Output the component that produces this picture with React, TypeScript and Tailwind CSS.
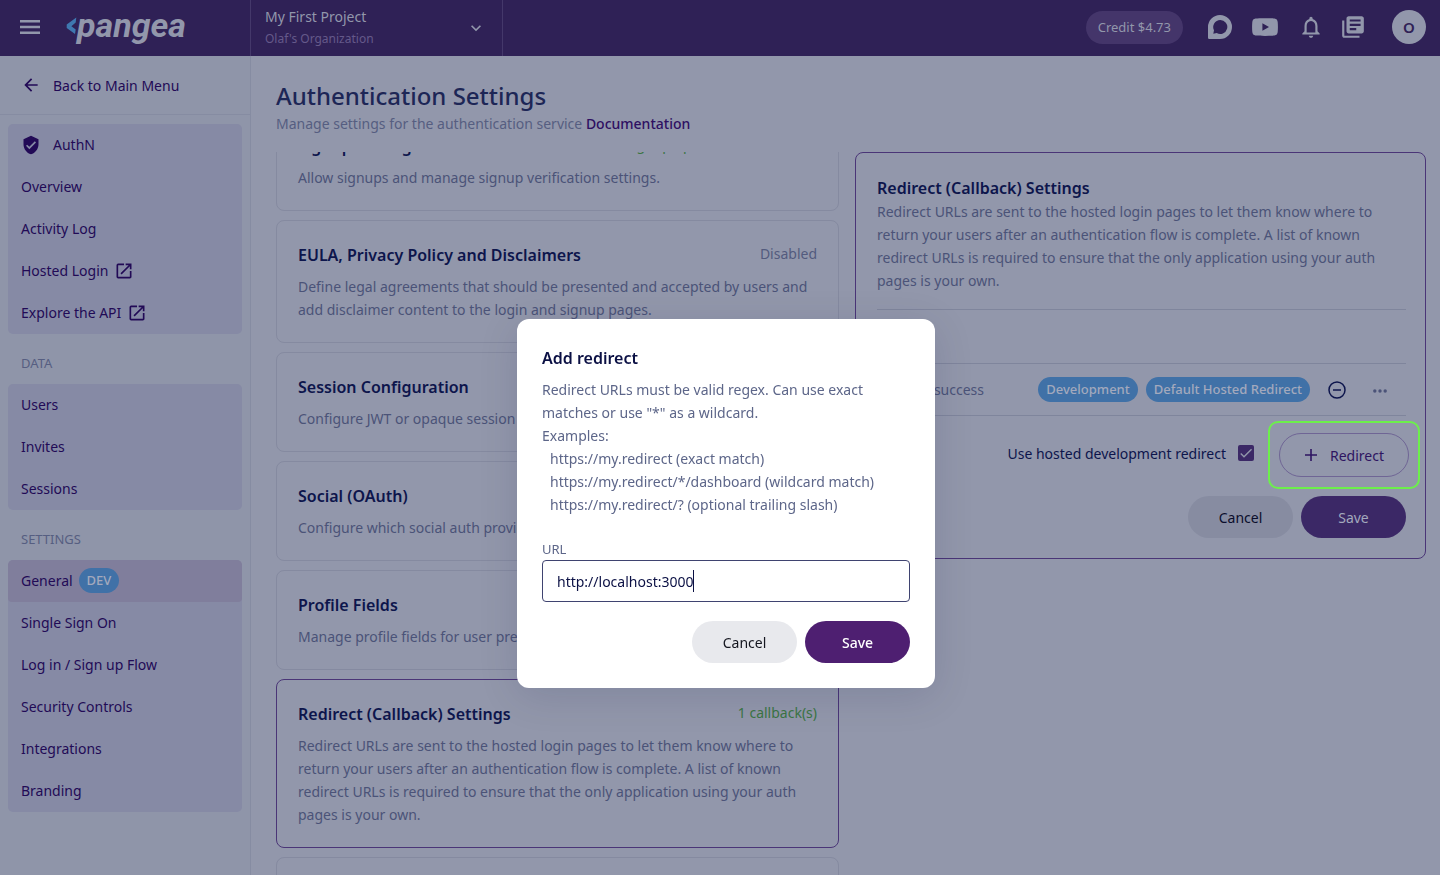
import type { ReactNode } from "react";
import {
  MdArrowBack,
  MdCheck,
  MdKeyboardArrowDown,
  MdLibraryBooks,
  MdNotificationsNone,
  MdOpenInNew,
  MdVerifiedUser,
} from "react-icons/md";

function Logo() {
  return (
    <a href="#" aria-label="Pangea" className="flex items-center text-[#9297ab]">
      <svg width="11" height="18" viewBox="0 0 11 18" className="-mt-1" aria-hidden="true">
        <path d="M10.300.5.7 7.500v3.500L9 17l.7-4.600L5.400 9.200 9.700 5.500z" fill="#3f78b0" />
      </svg>
      <span className="-mt-1.5 font-['Roboto',sans-serif] text-[34px] leading-9 font-bold italic">pangea</span>
    </a>
  );
}

function MenuIcon() {
  return (
    <svg width="20" height="14" viewBox="0 0 20 14" fill="currentColor" aria-hidden="true">
      <path d="M0 0h20v2.400H0zM0 5.800h20v2.400H0zM0 11.600h20V14H0z" />
    </svg>
  );
}

function ChatIcon() {
  return (
    <svg width="24" height="24" viewBox="0 0 24 24" aria-hidden="true">
      <path
        fillRule="evenodd"
        fill="currentColor"
        d="M12 0a12 12 0 1 1 0 24H1.200A1.200 1.200 0 0 1 0 22.800V12A12 12 0 0 1 12 0Zm.2 5A7 7 0 0 0 6 15.300L5.300 18.700l3.400-.7A7 7 0 1 0 12.200 5Z"
      />
    </svg>
  );
}

function VideoIcon() {
  return (
    <svg width="26" height="18" viewBox="0 0 26 18" aria-hidden="true">
      <path
        fillRule="evenodd"
        fill="currentColor"
        d="M3.500.5C7 0 19 0 22.500.5 24.500.8 25.500 2 25.700 4c.3 3 .3 7 0 10-.2 2-1.200 3.200-3.200 3.500-3.500.5-15.500.5-19 0C1.500 17.200.5 16 .3 14 0 11 0 7 .3 4 .5 2 1.500.8 3.500.5ZM10.400 5.200v7.600L17 9Z"
      />
    </svg>
  );
}

function Header() {
  return (
    <header className="flex h-14 shrink-0 items-stretch bg-[#2f2156] text-[#9297ab]">
      <div className="flex w-[251px] shrink-0 items-center gap-[26px] border-r border-[#44386a] pl-5">
        <button type="button" aria-label="Toggle menu" className="mb-0.5">
          <MenuIcon />
        </button>
        <Logo />
      </div>
      <button
        type="button"
        className="flex w-[252px] shrink-0 items-center justify-between border-r border-[#44386a] pr-4 pl-[14px] text-left"
      >
        <span className="flex flex-col">
          <span className="text-[14px] leading-[22px]">My First Project</span>
          <span className="text-[12px] leading-[22px] text-[#65598a]">Olaf's Organization</span>
        </span>
        <MdKeyboardArrowDown size={20} />
      </button>
      <div className="ml-auto flex items-center pr-[14px] pb-0.5">
        <span className="mr-[25px] rounded-full bg-[#44356a] px-3 text-[13px] leading-[33px]">Credit $4.73</span>
        <button type="button" aria-label="Chat" className="mr-5">
          <ChatIcon />
        </button>
        <button type="button" aria-label="Videos" className="mr-5">
          <VideoIcon />
        </button>
        <button type="button" aria-label="Notifications" className="mr-4">
          <MdNotificationsNone size={26} />
        </button>
        <button type="button" aria-label="Docs" className="mr-[26px]">
          <MdLibraryBooks size={26} />
        </button>
        <button
          type="button"
          className="size-[34px] rounded-full bg-[#9297ab] text-[15px] font-semibold text-[#2f2156]"
        >
          O
        </button>
      </div>
    </header>
  );
}

function Pill({ children }: { children: ReactNode }) {
  return (
    <span className="rounded-full bg-[#4071a7] px-2 text-[13px] leading-[25px] font-medium whitespace-nowrap text-[#a3a9bd]">
      {children}
    </span>
  );
}

type Item = { label: string; external?: boolean; shield?: boolean; badge?: string };

function MenuGroup({ title, items }: { title?: string; items: Item[] }) {
  return (
    <section>
      {title && <h2 className="px-[21px] pt-[19px] pb-[11px] text-[13px] leading-5 text-[#565e81]">{title}</h2>}
      <ul className="mx-2 overflow-hidden rounded-[5px] bg-[#868aa5]">
        {items.map((item) => (
          <li key={item.label}>
            <a
              href="#"
              className={
                item.badge
                  ? "flex h-[42px] items-center gap-1.5 rounded-[4px] bg-[#807e9c] px-[13px] pb-px"
                  : "flex h-[42px] items-center gap-1.5 px-[13px] pb-px"
              }
            >
              {item.shield && <MdVerifiedUser size={20} className="mr-1.5" />}
              {item.label}
              {item.external && <MdOpenInNew size={20} />}
              {item.badge && <Pill>{item.badge}</Pill>}
            </a>
          </li>
        ))}
      </ul>
    </section>
  );
}

function Sidebar() {
  return (
    <nav className="w-[251px] shrink-0 border-r border-[#868ca2] bg-[#8f95a9] text-[14px] text-[#220a56]">
      <a href="#" className="mb-[9px] flex h-[59px] items-center gap-3 border-b border-[#868ca2] pl-[21px]">
        <MdArrowBack size={20} />
        Back to Main Menu
      </a>
      <MenuGroup
        items={[
          { label: "AuthN", shield: true },
          { label: "Overview" },
          { label: "Activity Log" },
          { label: "Hosted Login", external: true },
          { label: "Explore the API", external: true },
        ]}
      />
      <MenuGroup title="DATA" items={[{ label: "Users" }, { label: "Invites" }, { label: "Sessions" }]} />
      <MenuGroup
        title="SETTINGS"
        items={[
          { label: "General", badge: "DEV" },
          { label: "Single Sign On" },
          { label: "Log in / Sign up Flow" },
          { label: "Security Controls" },
          { label: "Integrations" },
          { label: "Branding" },
        ]}
      />
    </nav>
  );
}

const redirectText =
  "Redirect URLs are sent to the hosted login pages to let them know where to return your users after an authentication flow is complete. A list of known redirect URLs is required to ensure that the only application using your auth pages is your own.";

type Setting = { title: string; text: string; status?: string; on?: boolean; selected?: boolean };

const settings: Setting[] = [
  {
    title: "Signup Settings",
    text: "Allow signups and manage signup verification settings.",
    status: "Signup open with verification",
    on: true,
  },
  {
    title: "EULA, Privacy Policy and Disclaimers",
    text: "Define legal agreements that should be presented and accepted by users and add disclaimer content to the login and signup pages.",
    status: "Disabled",
  },
  { title: "Session Configuration", text: "Configure JWT or opaque session tokens." },
  { title: "Social (OAuth)", text: "Configure which social auth providers are enabled." },
  { title: "Profile Fields", text: "Manage profile fields for user preferences." },
  { title: "Redirect (Callback) Settings", text: redirectText, status: "1 callback(s)", on: true, selected: true },
  { title: "Email Settings", text: "Configure the sender of authentication emails." },
];

function SettingCard({ setting }: { setting: Setting }) {
  return (
    <article
      className={
        setting.selected
          ? "shrink-0 rounded-lg border border-[#4a3577] px-[21px] pt-[22px] pb-[21px]"
          : "shrink-0 rounded-lg border border-[#858aa0] px-[21px] pt-[22px] pb-[21px]"
      }
    >
      <div className="flex justify-between">
        <h2 className="text-[16px] leading-6 font-semibold text-[#0d154c]">{setting.title}</h2>
        {setting.status && (
          <span className={setting.on ? "leading-[21px] text-[#3b7543]" : "leading-[21px] text-[#535b7e]"}>
            {setting.status}
          </span>
        )}
      </div>
      <p className="mt-2 leading-[23px] text-[#4b5378]">{setting.text}</p>
    </article>
  );
}

function RedirectPanel() {
  return (
    <section className="rounded-lg border border-[#4a3577] pt-[23px] pr-[19px] pb-5 pl-[21px]">
      <h2 className="text-[16px] leading-6 font-semibold text-[#0d154c]">Redirect (Callback) Settings</h2>
      <p className="leading-[23px] text-[#4b5378]">{redirectText}</p>
      <table className="mt-[17px] w-full border-y border-[#7f859c]">
        <thead>
          <tr className="h-[54px]">
            <th aria-label="URL" />
            <th aria-label="Tags" />
            <th aria-label="Actions" />
          </tr>
        </thead>
        <tbody>
          <tr className="h-[52px] border-t border-[#7f859c]">
            <td className="w-[107px] text-right text-[#4b5378]">redirect/success</td>
            <td>
              <div className="flex justify-end gap-2">
                <Pill>Development</Pill>
                <Pill>Default Hosted Redirect</Pill>
              </div>
            </td>
            <td className="w-24">
              <div className="flex items-center gap-[25px] pl-[18px]">
                <button type="button" aria-label="Remove redirect" className="text-[#0d154c]">
                  <svg width="18" height="18" viewBox="0 0 18 18" fill="none" stroke="currentColor" strokeWidth="1.5" aria-hidden="true">
                    <circle cx="9" cy="9" r="8" />
                    <path d="M5 9h8" />
                  </svg>
                </button>
                <button type="button" aria-label="More actions" className="text-[#4b5378]">
                  <svg width="18" height="18" viewBox="0 0 18 18" fill="currentColor" aria-hidden="true">
                    <circle cx="3.800" cy="10" r="1.700" />
                    <circle cx="9" cy="10" r="1.700" />
                    <circle cx="14.200" cy="10" r="1.700" />
                  </svg>
                </button>
              </div>
            </td>
          </tr>
        </tbody>
      </table>
      <div className="mt-[17px] flex items-center justify-end">
        <label className="mr-[25px] mb-1 flex items-center gap-3 text-[#0d154c]">
          Use hosted development redirect
          <span className="relative flex size-4">
            <input type="checkbox" defaultChecked className="size-4 appearance-none rounded-[2px] bg-[#3b2866]" />
            <MdCheck size={16} className="pointer-events-none absolute inset-0 text-[#9297ab]" />
          </span>
        </label>
        <div className="relative -mr-[3px]">
          <button
            type="button"
            className="flex h-11 w-[130px] items-center justify-center gap-3 rounded-full border border-[#6f6595] text-[#2e1562]"
          >
            <svg width="14" height="14" viewBox="0 0 14 14" stroke="currentColor" strokeWidth="1.600" aria-hidden="true">
              <path d="M7 1v12M1 7h12" />
            </svg>
            Redirect
          </button>
          <span className="pointer-events-none absolute -inset-x-[11px] -inset-y-3 rounded-[10px] border-2 border-[#6cf04b]" />
        </div>
      </div>
      <div className="mt-[19px] flex justify-end gap-2">
        <button type="button" className="h-[42px] w-[105px] rounded-full bg-[#878ca1] text-[#0b0e2c]">
          Cancel
        </button>
        <button type="button" className="h-[42px] w-[105px] rounded-full bg-[#3b2866] text-[#a3a9bd]">
          Save
        </button>
      </div>
    </section>
  );
}

function AddRedirectDialog() {
  return (
    <div className="fixed inset-0 flex items-center justify-center pt-[132px] pl-3">
      <form
        role="dialog"
        aria-labelledby="dialog-title"
        className="w-[418px] rounded-xl bg-white px-[25px] pt-[27px] pb-[25px] shadow-[0_8px_40px_rgba(3,16,62,0.12)]"
      >
        <h2 id="dialog-title" className="text-[16px] leading-6 font-semibold text-[#0b1044]">
          Add redirect
        </h2>
        <div className="mt-2 leading-[23px] text-[#5d6689]">
          <p>Redirect URLs must be valid regex. Can use exact matches or use "*" as a wildcard.</p>
          <p>Examples:</p>
          <ul className="pl-2">
            <li>https://my.redirect (exact match)</li>
            <li>https://my.redirect/*/dashboard (wildcard match)</li>
            <li>https://my.redirect/? (optional trailing slash)</li>
          </ul>
        </div>
        <label htmlFor="url" className="mt-[23px] block text-[13px] leading-5 text-[#5d6689]">
          URL
        </label>
        <div className="mt-px flex h-[42px] items-center rounded-[4px] border border-[#3f4370] px-[14px]">
          <input
            id="url"
            type="text"
            defaultValue="http://localhost:3000"
            className="field-sizing-content text-[#0b1044] outline-none"
          />
          <span className="h-[22px] w-px bg-[#0b1044]" />
        </div>
        <div className="mt-[19px] flex justify-end gap-2">
          <button type="button" className="h-[42px] w-[105px] rounded-full bg-[#e8e9ed] text-[#14161f]">
            Cancel
          </button>
          <button type="submit" className="h-[42px] w-[105px] rounded-full bg-[#4e1f71] font-medium text-white">
            Save
          </button>
        </div>
      </form>
    </div>
  );
}

export default function App() {
  return (
    <div className="flex h-screen flex-col overflow-hidden bg-[#9297ab] font-['Noto_Sans',sans-serif] text-[14px]">
      <Header />
      <div className="flex min-h-0 flex-1">
        <Sidebar />
        <main className="flex min-w-0 flex-1 flex-col pr-[14px] pl-[25px]">
          <div className="pt-6 pb-[17px]">
            <h1 className="text-[24px] leading-8 font-medium text-[#1d2656]">Authentication Settings</h1>
            <p className="leading-[23px] text-[#565e81]">
              Manage settings for the authentication service{" "}
              <a href="#" className="font-medium text-[#2e0f62]">
                Documentation
              </a>
            </p>
          </div>
          <div className="grid min-h-0 flex-1 grid-cols-[563fr_571fr] items-start gap-4">
            <div className="h-full min-w-0 overflow-hidden">
              <div className="-mt-[41px] flex flex-col gap-[9px]">
                {settings.map((setting) => (
                  <SettingCard key={setting.title} setting={setting} />
                ))}
              </div>
            </div>
            <RedirectPanel />
          </div>
        </main>
      </div>
      <AddRedirectDialog />
    </div>
  );
}
